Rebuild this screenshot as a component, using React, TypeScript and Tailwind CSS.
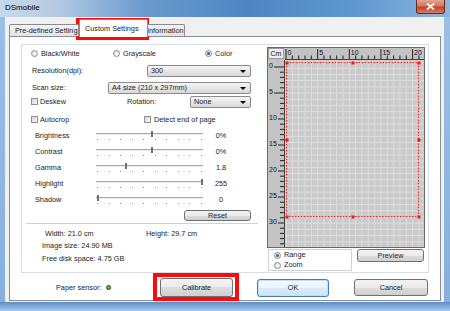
function Radio({ on }: { on?: boolean }) {
  return (
    <span className="flex h-[7px] w-[7px] shrink-0 items-center justify-center rounded-full border border-[#8c8c8c] bg-[radial-gradient(circle_at_60%_60%,#ffffff,#d2d2d2)]">
      {on && <span className="h-[3px] w-[3px] rounded-full bg-[#1f64b0]" />}
    </span>
  );
}

function Check() {
  return <span className="h-[7px] w-[7px] shrink-0 border border-[#8e8f8f] bg-[linear-gradient(135deg,#d6d6d6,#f6f6f6)]" />;
}

function Combo({ className, text }: { className: string; text: string }) {
  return (
    <div
      className={`flex h-[12px] items-center rounded-[2px] border border-[#8a8a8a] bg-[linear-gradient(#f6f6f6,#e6e6e6_50%,#d8d8d8)] pl-[3px] pr-[4px] ${className}`}
    >
      <span className="flex-1 whitespace-nowrap">{text}</span>
      <span className="h-0 w-0 border-x-[3px] border-t-[3px] border-x-transparent border-t-black" />
    </div>
  );
}

function Btn({ className, children }: { className: string; children: React.ReactNode }) {
  return (
    <div
      className={`flex items-center justify-center rounded-[3px] border border-[#707070] bg-[linear-gradient(#f2f2f2_0%,#ebebeb_50%,#dddddd_50%,#cfcfcf_100%)] ${className}`}
    >
      {children}
    </div>
  );
}

function Slider({ at }: { at: number }) {
  return (
    <div className="relative flex h-[12px] w-[107px] flex-col">
      <div className="mt-[3px] h-[2px] border-t border-[#a8a8a8] bg-[#ececec]" />
      <div className="mt-[4px] flex justify-between px-[1px]">
        {Array.from({ length: 10 }).map((_, i) => (
          <span key={i} className="h-[1px] w-[1px] bg-[#8a8a8a]" />
        ))}
      </div>
      <span className="absolute top-[1px] h-[6px] w-[2px] bg-[#707070]" style={{ left: at }} />
    </div>
  );
}

const sliders = [
  { label: "Brightness", at: 55, value: "0%" },
  { label: "Contrast", at: 55, value: "0%" },
  { label: "Gamma", at: 29, value: "1.8" },
  { label: "Highlight", at: 105, value: "255" },
  { label: "Shadow", at: 1, value: "0" },
];

function PreviewCanvas() {
  const cols = Array.from({ length: 22 }, (_, i) => 19 + i * 6.33);
  const rows = Array.from({ length: 30 }, (_, i) => 15 + i * 6.2).filter((y) => y < 200);
  const vticks = Array.from({ length: 35 }, (_, i) => 20 + i * 5.2).filter((y) => y < 199);
  return (
    <svg width="158" height="201" viewBox="0 0 158 201" className="block">
      <rect x="0.5" y="0.5" width="157" height="200" fill="#c3c3c3" stroke="#6a6a6a" />
      {/* Cm box */}
      <rect x="1.5" y="1.5" width="15" height="10" fill="#eeeeee" stroke="#9a9a9a" />
      <text x="9" y="9" fontSize="7" textAnchor="middle" fill="#111" fontFamily="Liberation Sans, Arial, sans-serif">
        Cm
      </text>
      {/* canvas */}
      <rect x="18" y="13" width="139" height="187" fill="#cacaca" />
      {cols.map((x, i) => (
        <line key={`c${i}`} x1={x} y1="13" x2={x} y2="200" stroke="#dddddd" strokeWidth="1" />
      ))}
      {rows.map((y, i) => (
        <line key={`r${i}`} x1="18" y1={y} x2="157" y2={y} stroke="#dddddd" strokeWidth="1" />
      ))}
      <line x1="17.5" y1="13" x2="17.5" y2="200" stroke="#404040" />
      <line x1="18" y1="12.5" x2="157" y2="12.5" stroke="#404040" />
      {/* top ruler */}
      {cols.map((x, i) =>
        i % 5 === 0 ? (
          <g key={`t${i}`}>
            <line x1={x} y1="2" x2={x} y2="12" stroke="#222" />
            <text x={x + 1.5} y="8" fontSize="7" fill="#111" fontFamily="Liberation Sans, Arial, sans-serif">
              {i}
            </text>
          </g>
        ) : (
          <line key={`t${i}`} x1={x} y1="8.5" x2={x} y2="12" stroke="#222" />
        )
      )}
      {/* left ruler */}
      {vticks.map((y, i) =>
        i % 5 === 0 ? (
          <g key={`l${i}`}>
            <line x1={i < 10 ? 7 : 11} y1={y} x2="17" y2={y} stroke="#222" />
            <text x="2" y={y + 0.5} fontSize="7" fill="#111" fontFamily="Liberation Sans, Arial, sans-serif">
              {i}
            </text>
          </g>
        ) : (
          <line key={`l${i}`} x1="13" y1={y} x2="17" y2={y} stroke="#222" />
        )
      )}
      {/* scan area */}
      <rect x="19.5" y="15.5" width="132" height="154" fill="none" stroke="#ff1010" strokeDasharray="1.5 1.5" />
      {[
        [19, 15],
        [85, 15],
        [151, 15],
        [19, 92],
        [151, 92],
        [19, 169],
        [85, 169],
        [151, 169],
      ].map(([x, y], i) => (
        <rect key={`h${i}`} x={x - 0.5} y={y - 0.5} width="3" height="3" fill="#ff1010" />
      ))}
    </svg>
  );
}

export default function App() {
  return (
    <div className="relative flex h-[311px] w-[450px] flex-col overflow-hidden bg-[linear-gradient(#9cc0e6,#86afdc)] font-['Liberation_Sans',Arial,sans-serif] text-[7.3px] leading-none text-[#1b1b1b]">
      {/* title bar */}
      <div className="flex h-[17px] shrink-0 items-start bg-[linear-gradient(90deg,#c6d9ec_0%,#b6cce4_12%,#6a9acd_32%,#4f86c2_55%,#6098cf_80%,#8db6df_100%)]">
        <span className="ml-[5px] mt-[4px] text-[8px] text-black">DSmobile</span>
        <div className="ml-auto mr-[5px] flex h-[14px] w-[29px] items-center justify-center rounded-b-[3px] border border-t-0 border-[#6b2a20] bg-[linear-gradient(#e6a594,#d27560_45%,#c0452c_55%,#d67a62)]">
          <svg width="9" height="7" viewBox="0 0 9 7">
            <path d="M1 0.5 L8 6.5 M8 0.5 L1 6.5" stroke="#fff" strokeWidth="1.7" />
          </svg>
        </div>
      </div>

      <div className="flex h-[285px] shrink-0">
        <div className="w-[5px]" />
        <div className="flex w-[439px] flex-col bg-[#f0f0f0] pl-[4px] pr-[3px]">
          {/* tabs */}
          <div className="relative z-10 flex h-[19px] items-end">
            <div className="flex h-[12px] w-[70px] items-center overflow-hidden whitespace-nowrap rounded-t-[2px] border border-b-0 border-[#898c95] bg-[linear-gradient(#f3f3f3,#e4e4e4)] pl-[5px]">
              Pre-defined Settings
            </div>
            <div className="relative z-10 mb-[-1px] flex h-[18px] w-[69px] items-center whitespace-nowrap rounded-t-[2px] border border-b-0 border-[#898c95] bg-white pl-[5px]">
              Custom Settings
            </div>
            <div className="-ml-[2px] flex h-[12px] w-[39px] items-center overflow-hidden whitespace-nowrap rounded-t-[2px] border border-b-0 border-[#898c95] bg-[linear-gradient(#f3f3f3,#e4e4e4)]">
              Information
            </div>
          </div>

          {/* tab panel */}
          <div className="h-[265px] border border-[#898c95] bg-white">
            <div className="ml-[11px] mt-[7px] flex h-[229px] w-[408px] border border-[#d5dfe5]">
              {/* settings column */}
              <div className="flex w-[245px] flex-col">
                <div className="mt-[3px] flex h-[12px] items-center pl-[9px]">
                  <div className="flex w-[82px] items-center gap-[3px]">
                    <Radio />
                    <span>Black/White</span>
                  </div>
                  <div className="flex w-[92px] items-center gap-[3px]">
                    <Radio />
                    <span>Grayscale</span>
                  </div>
                  <div className="flex items-center gap-[3px]">
                    <Radio on />
                    <span>Color</span>
                  </div>
                </div>

                <div className="mt-[5px] flex h-[12px] items-center pl-[10px]">
                  <span className="w-[115px]">Resolution(dpi):</span>
                  <Combo className="w-[104px]" text="300" />
                </div>

                <div className="mt-[5px] flex h-[12px] items-center pl-[10px]">
                  <span className="w-[76px]">Scan size:</span>
                  <Combo className="w-[143px]" text="A4 size (210 x 297mm)" />
                </div>

                <div className="mt-[2px] flex h-[12px] items-center pl-[9px]">
                  <div className="flex w-[96px] items-center gap-[2px]">
                    <Check />
                    <span>Deskew</span>
                  </div>
                  <span className="w-[63px]">Rotation:</span>
                  <Combo className="w-[61px]" text="None" />
                </div>

                <div className="mt-[6px] flex h-[12px] items-center pl-[9px]">
                  <div className="flex w-[113px] items-center gap-[2px]">
                    <Check />
                    <span>Autocrop</span>
                  </div>
                  <div className="flex items-center gap-[3px]">
                    <Check />
                    <span>Detect end of page</span>
                  </div>
                </div>

                {sliders.map((s) => (
                  <div key={s.label} className="mt-[4px] flex h-[12px] items-center pl-[13px]">
                    <span className="w-[61px]">{s.label}</span>
                    <Slider at={s.at} />
                    <span className="ml-[6px] w-[24px] text-center">{s.value}</span>
                  </div>
                ))}

                <Btn className="ml-[162px] mt-[4px] h-[11px] w-[67px]">Reset</Btn>

                <div className="ml-[4px] mt-[2px] h-px w-[232px] bg-[#d0d0d0]" />

                <div className="mt-[5px] flex h-[10px] items-center pl-[23px]">
                  <span className="w-[101px]">Width: 21.0 cm</span>
                  <span>Height: 29.7 cm</span>
                </div>
                <div className="mt-[2px] flex h-[10px] items-center pl-[20px]">Image size: 24.90 MB</div>
                <div className="mt-[3px] flex h-[10px] items-center pl-[20px]">Free disk space: 4.75 GB</div>
              </div>

              {/* preview column */}
              <div className="flex w-[161px] flex-col">
                <div className="mt-[2px]">
                  <PreviewCanvas />
                </div>
                <div className="mt-[1px] flex items-start">
                  <div className="ml-[1px] flex h-[22px] w-[84px] flex-col border border-[#c9d3da] pl-[5px]">
                    <div className="flex h-[10px] items-center gap-[3px]">
                      <Radio on />
                      <span>Range</span>
                    </div>
                    <div className="flex h-[10px] items-center gap-[3px]">
                      <Radio />
                      <span>Zoom</span>
                    </div>
                  </div>
                  <Btn className="ml-[5px] h-[13px] w-[67px]">Preview</Btn>
                </div>
              </div>
            </div>

            {/* bottom row */}
            <div className="mt-[5px] flex h-[19px] items-center pl-[46px]">
              <span className="w-[50px] whitespace-nowrap">Paper sensor:</span>
              <span className="h-[5px] w-[5px] rounded-full border border-[#1f4a1f] bg-[radial-gradient(circle_at_40%_40%,#8ad88a,#1f7a1f)]" />
              <Btn className="ml-[49px] h-[19px] w-[73px]">Calibrate</Btn>
              <div className="ml-[24px] flex h-[18px] w-[72px] items-center justify-center rounded-[3px] border border-[#3c7fb1] bg-[linear-gradient(#f4f9fd_0%,#eaf3fb_50%,#dbeaf6_50%,#cfe3f3_100%)] shadow-[inset_0_0_0_1px_#bfe0f7]">
                OK
              </div>
              <Btn className="ml-[25px] h-[17px] w-[74px]">Cancel</Btn>
            </div>
          </div>
        </div>
        <div className="w-[6px]" />
      </div>

      <div className="flex-1 bg-[linear-gradient(#5b8cc4,#79a6d8_40%,#a6c7e8)]" />

      {/* highlight marks */}
      <div className="absolute left-[76px] top-[18px] h-[22px] w-[73px] border-4 border-[#ff0a0a]" />
      <div className="absolute left-[153px] top-[273px] h-[28px] w-[86px] border-4 border-[#ff0a0a]" />
    </div>
  );
}
